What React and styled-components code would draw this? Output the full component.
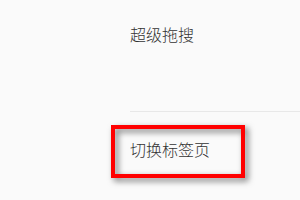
import React from "react";
import styled, { createGlobalStyle } from "styled-components";

const Global = createGlobalStyle`
  html, body { margin: 0; padding: 0; background: #fafafa; }
  body { width: 300px; height: 200px; overflow: hidden; }
`;

const Page = styled.div`
  width: 300px;
  height: 200px;
  background: #fafafa;
  padding-left: 130px;
  box-sizing: border-box;
  font-family: "Noto Sans CJK SC", "Noto Sans", sans-serif;
  font-weight: 300;
  color: #333;
`;

const Item = styled.div`
  position: relative;
  box-sizing: border-box;
  height: ${(p) => p.$h}px;
  padding-top: ${(p) => p.$pt}px;
  border-bottom: ${(p) => (p.$divider ? "1px solid #e8e8e8" : "none")};
  font-size: 16px;
  line-height: 24px;
`;

const Highlight = styled.div`
  position: absolute;
  left: -19px;
  top: 13px;
  width: 134px;
  height: 53px;
  box-sizing: border-box;
  border: 4px solid #ff0000;
  filter: drop-shadow(3px 3px 3px rgba(0, 0, 0, 0.55));
  pointer-events: none;
`;

export default function App() {
  return (
    <>
      <Global />
      <Page>
        <Item $h={112} $pt={22} $divider>
          超级拖搜
        </Item>
        <Item $h={88} $pt={25}>
          切换标签页
          <Highlight />
        </Item>
      </Page>
    </>
  );
}
